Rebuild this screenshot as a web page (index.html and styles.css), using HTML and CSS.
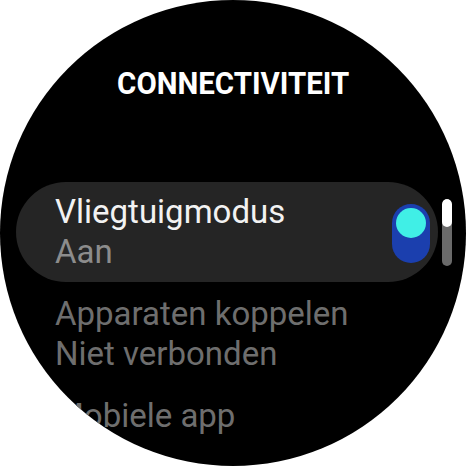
FILE: index.html
```html
<!DOCTYPE html>
<html>
<head>
<meta charset="utf-8">
<link rel="stylesheet" href="styles.css">
</head>
<body>
<div class="watch">
  <div class="title"><span class="title-text">CONNECTIVITEIT</span></div>
  <div class="list">
    <div class="item item-active">
      <div class="item-text">
        <div class="item-label">Vliegtuigmodus</div>
        <div class="item-value">Aan</div>
      </div>
      <div class="toggle"><div class="knob"></div></div>
    </div>
    <div class="item">
      <div class="item-text dim">
        <div class="item-label">Apparaten koppelen</div>
        <div class="item-value">Niet verbonden</div>
      </div>
    </div>
    <div class="item">
      <div class="item-text dim">
        <div class="item-label">Mobiele app</div>
      </div>
    </div>
  </div>
  <div class="scrollbar"><div class="scroll-thumb"></div></div>
</div>
</body>
</html>
```
FILE: styles.css
```css
html, body {
  margin: 0;
  padding: 0;
  background: #ffffff;
}
.watch {
  position: relative;
  width: 466px;
  height: 466px;
  border-radius: 50%;
  background: #000000;
  overflow: hidden;
  font-family: Roboto, "Liberation Sans", sans-serif;
}
.title {
  padding-top: 66px;
  text-align: center;
  font-weight: 700;
  font-size: 31px;
  line-height: 36px;
  color: #ffffff;
}
.title-text {
  display: inline-block;
  transform: scaleX(0.95);
}
.list {
  margin-top: 80px;
  display: flex;
  flex-direction: column;
  gap: 2px;
}
.item {
  box-sizing: border-box;
  height: 100px;
  margin-left: 16px;
  width: 422px;
  padding: 10px 8px 10px 39px;
  display: flex;
  align-items: center;
  justify-content: space-between;
  border-radius: 50px;
}
.item-active {
  background: #252525;
}
.item-text {
  align-self: flex-start;
  font-size: 33px;
  line-height: 40px;
}
.item-label {
  color: #f2f2f2;
}
.item-value {
  color: #8c8c8c;
}
.dim .item-label,
.dim .item-value {
  color: #6e6e6e;
}
.toggle {
  box-sizing: border-box;
  width: 38px;
  height: 59px;
  border-radius: 19px;
  background: #1b3fae;
  padding: 4px;
  margin-top: 2px;
}
.knob {
  width: 30px;
  height: 30px;
  border-radius: 50%;
  background: #40efe6;
}
.scrollbar {
  position: absolute;
  left: 442px;
  top: 199px;
  width: 10px;
  height: 67px;
  border-radius: 5px;
  background: #6a6a6a;
  overflow: hidden;
}
.scroll-thumb {
  height: 28px;
  border-radius: 5px;
  background: #ffffff;
}
```
